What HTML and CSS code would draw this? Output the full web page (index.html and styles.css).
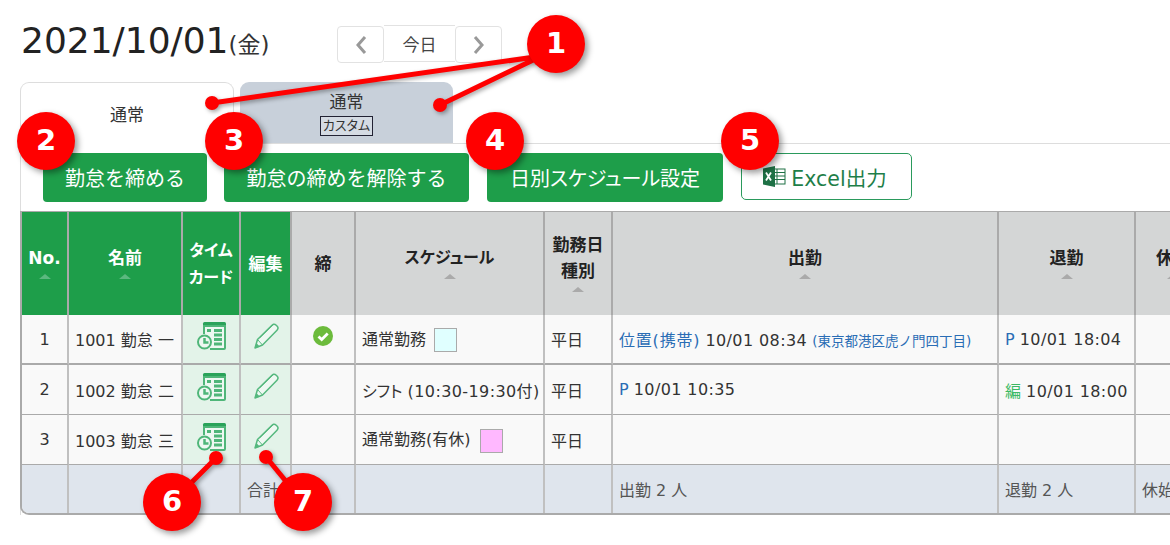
FILE: index.html
```html
<!DOCTYPE html>
<html lang="ja">
<head>
<meta charset="utf-8">
<title>勤怠</title>
<link rel="stylesheet" href="styles.css">
</head>
<body>
<svg width="0" height="0" class="defs">
  <symbol id="card" viewBox="0 0 29 28">
    <path d="M6 1.500A1.500 1.500 0 0 1 7.500 0h20A1.500 1.500 0 0 1 29 1.500V4H6z" fill="#2aa35a"/>
    <path d="M7 12V4h21v22a1 1 0 0 1-1 1H13" fill="#eef8f2" stroke="#4fb679" stroke-width="2"/>
    <rect x="10" y="7" width="4" height="3" fill="#4fb679"/>
    <path d="M17 8.500h8M17 13h8M17 17.500h8M17 22h8" stroke="#4fb679" stroke-width="3"/>
    <circle cx="7.500" cy="20" r="6.500" fill="#eef8f2" stroke="#4fb679" stroke-width="2"/>
    <path d="M7.500 16v4.500h4" fill="none" stroke="#4fb679" stroke-width="2.500"/>
  </symbol>
  <symbol id="pen" viewBox="0 0 26 27">
    <path d="M2 25l2.500-8.500L19 2.200a3 3 0 0 1 4.200 0l.8.800a3 3 0 0 1 0 4.200L9.500 22z" fill="#eef8f2" stroke="#55b87e" stroke-width="1.500" stroke-linejoin="round"/>
    <path d="M4.500 16.500l5 5.500M7 14.500L21 .9" fill="none" stroke="#55b87e" stroke-width="1"/>
    <path d="M2 25l1.300-5 3.700 3.800z" fill="#55b87e"/>
  </symbol>
</svg>

<header class="head">
  <h1 class="date">2021/10/01<small class="dow">(金)</small></h1>
  <nav class="pager">
    <button class="pg pg-side pg-prev"><svg width="14" height="22" viewBox="0 0 14 22"><path d="M11 3L4 11l7 8" fill="none" stroke="#999" stroke-width="3"/></svg></button>
    <button class="pg pg-today">今日</button>
    <button class="pg pg-side pg-next"><svg width="14" height="22" viewBox="0 0 14 22"><path d="M3 3l7 8-7 8" fill="none" stroke="#999" stroke-width="3"/></svg></button>
  </nav>
</header>

<div class="tabs">
  <div class="tab tab-on">通常</div>
  <div class="tab tab-off"><span>通常</span><span class="tag"><span class="kana">カスタム</span></span></div>
</div>

<section class="panel">
  <div class="actions">
    <button class="btn btn-a">勤怠を締める</button>
    <button class="btn btn-b">勤怠の締めを解除する</button>
    <button class="btn btn-c">日別<span class="kana">スケジュール</span>設定</button>
    <button class="btn-x">
      <svg width="23" height="21" viewBox="0 0 23 21"><rect x="8" y="3" width="14" height="15" fill="#fff" stroke="#1e7145"/><path d="M14 3v15M9 6.500h13M9 10h13M9 13.500h13" stroke="#1e7145"/><path d="M0 2.500L12 0v21L0 18.500z" fill="#1e7145"/><path d="M3 6.500l5 8M8 6.500l-5 8" stroke="#fff" stroke-width="1.800"/></svg>
      <span>Excel出力</span>
    </button>
  </div>

  <div class="tablewrap">
    <table class="grid">
      <colgroup>
        <col class="c1"><col class="c2"><col class="c3"><col class="c4"><col class="c5"><col class="c6"><col class="c7"><col class="c8"><col class="c9"><col class="c10">
      </colgroup>
      <thead>
        <tr>
          <th class="g">No.<i class="sort"></i></th>
          <th class="g">名前<i class="sort"></i></th>
          <th class="g"><span class="kana">タイム</span><br><span class="kana">カード</span></th>
          <th class="g">編集</th>
          <th>締</th>
          <th><span class="kana">スケジュール</span><i class="sort"></i></th>
          <th>勤務日<br>種別<i class="sort"></i></th>
          <th>出勤<i class="sort"></i></th>
          <th>退勤<i class="sort"></i></th>
          <th>休憩<i class="sort"></i></th>
        </tr>
      </thead>
      <tbody>
        <tr class="thick">
          <td class="ctr">1</td><td>1001 勤怠 一</td>
          <td class="ic"><svg class="i-card"><use href="#card"/></svg></td>
          <td class="ic"><svg class="i-pen"><use href="#pen"/></svg></td>
          <td class="ctr chk"><svg width="20" height="20" viewBox="0 0 20 20"><circle cx="10" cy="10" r="10" fill="#6cbb3c"/><path d="M5.500 10.500l3.200 3 6-6" fill="none" stroke="#fff" stroke-width="2.800"/></svg></td>
          <td>通常勤務<i class="sw sw-b"></i></td><td>平日</td>
          <td><a class="lk loc">位置(携帯)</a> <span class="tm">10/01 08:34</span> <a class="addr">(東京都港区虎ノ門四丁目)</a></td>
          <td><a class="lk">P</a> <span class="tm">10/01 18:04</span></td><td></td>
        </tr>
        <tr>
          <td class="ctr">2</td><td>1002 勤怠 二</td>
          <td class="ic"><svg class="i-card"><use href="#card"/></svg></td>
          <td class="ic"><svg class="i-pen"><use href="#pen"/></svg></td>
          <td></td>
          <td><span class="kana">シフト</span> <span class="tm">(10:30-19:30付)</span></td><td>平日</td>
          <td><a class="lk">P</a> <span class="tm">10/01 10:35</span></td>
          <td><a class="ed">編</a> <span class="tm">10/01 18:00</span></td><td></td>
        </tr>
        <tr>
          <td class="ctr">3</td><td>1003 勤怠 三</td>
          <td class="ic"><svg class="i-card"><use href="#card"/></svg></td>
          <td class="ic"><svg class="i-pen"><use href="#pen"/></svg></td>
          <td></td>
          <td>通常勤務(有休)<i class="sw sw-p"></i></td><td>平日</td>
          <td></td><td></td><td></td>
        </tr>
      </tbody>
      <tfoot>
        <tr>
          <td></td><td></td><td></td><td>合計</td><td></td><td></td><td></td>
          <td>出勤 2 人</td><td>退勤 2 人</td><td>休始 0 人</td>
        </tr>
      </tfoot>
    </table>
  </div>
</section>

<svg class="leaders" width="1170" height="545" viewBox="0 0 1170 545">
  <g fill="#f00" stroke="#f00">
    <path d="M556 54L212 103M556 49L440 105M172 502L216 458M303 502L266 457" stroke-width="5" fill="none"/>
    <circle cx="212" cy="103" r="7" stroke="none"/>
    <circle cx="440" cy="105" r="7" stroke="none"/>
    <circle cx="216" cy="458" r="7" stroke="none"/>
    <circle cx="266" cy="457" r="7" stroke="none"/>
  </g>
</svg>
<div class="badge b1">1</div>
<div class="badge b2">2</div>
<div class="badge b3">3</div>
<div class="badge b4">4</div>
<div class="badge b5">5</div>
<div class="badge b6">6</div>
<div class="badge b7">7</div>
</body>
</html>
```

FILE: styles.css
```css
* { box-sizing: border-box; }
html, body { margin: 0; padding: 0; overflow: hidden; height: 545px; background: #fff; }
body {
  position: relative;
  width: 1170px;
  font-family: "DejaVu Sans", "Noto Sans CJK JP", sans-serif;
  font-size: 16px;
  color: #333;
}
.defs { position: absolute; }
.kana { font-feature-settings: "palt"; }

.head { height: 82px; display: flex; align-items: flex-start; padding: 25px 0 0 21px; }
.date { margin: -6px 0 0; width: 316px; font-size: 36px; line-height: 44px; font-weight: 400; color: #222; white-space: nowrap; }
.dow { font-size: 23px; color: #333; }
.pager { display: flex; }
.pg { background: #fff; font: inherit; font-size: 17px; color: #444; padding: 0; display: flex; align-items: center; justify-content: center; }
.pg-side { width: 47px; height: 37px; margin-top: 1px; border: 1px solid #e2e2e2; border-radius: 4px; }
.pg-today { width: 71px; height: 37px; border: 1px solid #e2e2e2; border-left: 0; border-right: 0; }
.pg-prev { border-right: 1px solid #e2e2e2; }

.tabs { display: flex; gap: 6px; margin-left: 20px; height: 62px; position: relative; z-index: 1; }
.tab { width: 214px; border-radius: 9px 9px 0 0; text-align: center; color: #333; font-size: 17px; }
.tab-on { background: #fff; border: 1px solid #ddd; border-bottom: 0; height: 62px; line-height: 64px; }
.tab-off { background: #c8d0da; width: 213px; height: 61px; display: flex; flex-direction: column; align-items: center; padding-top: 9px; line-height: 22px; }
.tag { margin-top: 3px; width: 53px; height: 20px; border: 1px solid #223; font-size: 13px; line-height: 18px; background: #d5dbe3; text-align: center; }

.panel { margin-left: 20px; border-top: 1px solid #ddd; border-left: 1px solid #ddd; margin-top: -1px; width: 1500px; }
.actions { display: flex; align-items: flex-start; gap: 18px; padding: 9px 0 9px 22px; }
.btn { height: 49px; border: 0; border-radius: 4px; background: #1e9e4a; color: #fff; font: inherit; font-size: 20px; padding: 0; white-space: nowrap; }
.btn-a { width: 164px; margin-right: -1px; }
.btn-b { width: 245px; }
.btn-c { width: 236px; }
.btn-x { width: 171px; height: 47px; border: 1px solid #2a9a5c; border-radius: 5px; background: #fff; color: #1e7e48; font: inherit; font-size: 20.500px; display: flex; align-items: center; justify-content: center; gap: 5px; padding: 0 3px 0 0; white-space: nowrap; }

.tablewrap { margin-left: -1px; border-top: 1px solid #aaa; border-left: 2px solid #aaa; border-bottom: 2px solid #aaa; border-bottom-left-radius: 9px; overflow: hidden; width: 1300px; }
.grid { border-collapse: separate; border-spacing: 0; table-layout: fixed; width: 1190px; }
.c1 { width: 47px; } .c2 { width: 114px; } .c3 { width: 58px; } .c4 { width: 51px; } .c5 { width: 64px; }
.c6 { width: 189px; } .c7 { width: 68px; } .c8 { width: 386px; } .c9 { width: 137px; } .c10 { width: 76px; }

.grid th, .grid td { border-right: 2px solid #c0c0c0; border-bottom: 1px solid #aaa; padding: 0 0 0 6px; white-space: nowrap; overflow: hidden; }
.grid th { height: 103px; background: #d4d6d6; color: #222; font-size: 17px; font-weight: 700; line-height: 26px; text-align: center; padding: 0; border-right-color: #aaa; border-bottom: 0; vertical-align: middle; }
.grid th .kana { font-size: 16px; }
.grid th.g { background: #1e9e4a; color: #fff; }
.sort { display: block; width: 0; height: 0; margin: 3px auto 4px; border: 6px solid transparent; border-top: 0; border-bottom: 5px solid #aaa; }
.g .sort { border-bottom-color: #5cb87f; }

.grid td { height: 50px; background: #f9f9f9; vertical-align: middle; }
.grid tr.thick td { border-bottom: 2px solid #aaa; }
.grid td.ctr { text-align: center; padding: 0; }
.grid td.ic { background: #e3f3e9; text-align: center; padding: 0 0 6px; }
.grid td.chk { padding-bottom: 6px; }
.chk svg { display: block; margin: 0 auto; }
.i-card { width: 29px; height: 28px; display: block; margin: 0 auto; }
.i-pen { width: 26px; height: 27px; display: block; margin: 0 auto; }
.sw { display: inline-block; width: 23px; height: 24px; margin-left: 8px; border: 1px solid #aaa; vertical-align: middle; }
.sw-b { background: #e0ffff; }
.sw-p { background: #ffb8ff; margin-left: 9px; }
.lk { color: #2a6db5; }
.loc { letter-spacing: .8px; }
.tm { letter-spacing: .4px; }
.ed { color: #3cb964; }
.addr { color: #2a6db5; font-size: 13.500px; }
.grid tfoot td { background: #dfe5ed; height: 48px; color: #555; border-bottom: 0; }

.leaders { position: absolute; left: 0; top: 0; z-index: 2; filter: drop-shadow(2px 2px 2px rgba(0,0,0,.35)); pointer-events: none; }
.badge { position: absolute; z-index: 3; width: 58px; height: 58px; border-radius: 50%; background: #f00; color: #fff; font-family: "DejaVu Sans", sans-serif; font-size: 29px; font-weight: 700; line-height: 56px; text-align: center; box-shadow: 3px 3px 6px rgba(0,0,0,.4); }
.b1 { left: 527px; top: 15px; }
.b2 { left: 17px; top: 112px; }
.b3 { left: 205px; top: 112px; }
.b4 { left: 466px; top: 112px; }
.b5 { left: 721px; top: 112px; }
.b6 { left: 143px; top: 473px; }
.b7 { left: 274px; top: 473px; }
```
